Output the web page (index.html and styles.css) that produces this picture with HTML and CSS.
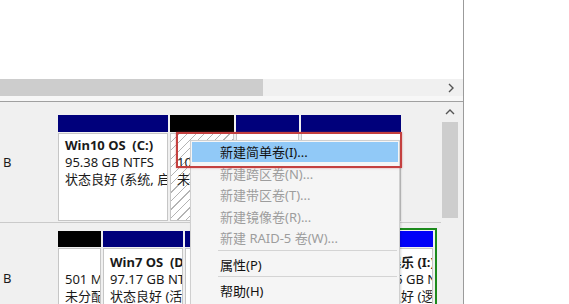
FILE: index.html
```html
<!DOCTYPE html>
<html lang="zh-CN">
<head>
    <meta charset="UTF-8">
    <meta name="viewport" content="width=device-width, initial-scale=1.0">
    <title>磁盘管理</title>
    <link rel="stylesheet" href="styles.css">
</head>
<body>
    <div class="screen">
        <div class="window">
            <div class="volume-list"></div>
            <div class="hscroll">
                <div class="hthumb"></div>
                <div class="htrack"></div>
                <div class="arrow-btn">
                    <svg width="8" height="10" viewBox="0 0 8 10"><polyline points="2,1 6,5 2,9" fill="none" stroke="#555" stroke-width="1.4"/></svg>
                </div>
            </div>
            <div class="splitter"></div>

            <div class="disk-pane">
                <div class="disks">
                    <div class="disk-row row-1">
                        <div class="disk-label">B</div>
                        <div class="segments">
                            <div class="seg" style="width: 110px">
                                <div class="seg-head navy"></div>
                                <div class="seg-body">
                                    <div class="vol-name">Win10 OS &nbsp;(C:)</div>
                                    <div>95.38 GB NTFS</div>
                                    <div>状态良好 (系统, 启动, 页面文件)</div>
                                </div>
                            </div>
                            <div class="seg" style="width: 64px">
                                <div class="seg-head black"></div>
                                <div class="seg-body hatched">
                                    <div class="vol-name">&nbsp;</div>
                                    <div>100 MB</div>
                                    <div>未分配</div>
                                </div>
                            </div>
                            <div class="seg" style="width: 63px">
                                <div class="seg-head navy"></div>
                                <div class="seg-body"></div>
                            </div>
                            <div class="seg" style="width: 100px">
                                <div class="seg-head navy"></div>
                                <div class="seg-body"></div>
                            </div>
                        </div>
                    </div>

                    <div class="disk-row row-2">
                        <div class="disk-label">B</div>
                        <div class="segments">
                            <div class="seg" style="width: 43px">
                                <div class="seg-head black"></div>
                                <div class="seg-body">
                                    <div class="vol-name">&nbsp;</div>
                                    <div>501 MB</div>
                                    <div>未分配</div>
                                </div>
                            </div>
                            <div class="seg" style="width: 80px">
                                <div class="seg-head navy"></div>
                                <div class="seg-body">
                                    <div class="vol-name">Win7 OS &nbsp;(D:)</div>
                                    <div>97.17 GB NTFS</div>
                                    <div>状态良好 (活动, 主分区)</div>
                                </div>
                            </div>
                            <div class="seg" style="width: 170px">
                                <div class="seg-head navy"></div>
                                <div class="seg-body"></div>
                            </div>
                            <div class="seg extended" style="width: 80px">
                                <div class="seg-head blue"></div>
                                <div class="seg-body tight">
                                    <div class="vol-name">休闲娱乐 (I:)</div>
                                    <div>200.45 GB NTFS</div>
                                    <div>状态良好 (逻辑驱动器)</div>
                                </div>
                            </div>
                        </div>
                    </div>
                </div>

                <div class="vscroll">
                    <div class="arrow-up">
                        <svg width="10" height="8" viewBox="0 0 10 8"><polyline points="1,6 5,2 9,6" fill="none" stroke="#555" stroke-width="1.4"/></svg>
                    </div>
                    <div class="vthumb"></div>
                </div>
            </div>
        </div>

        <!-- context menu over the unallocated block -->
        <div class="context-menu">
            <div class="menu-item active">新建简单卷(I)...</div>
            <div class="menu-item disabled">新建跨区卷(N)...</div>
            <div class="menu-item disabled">新建带区卷(T)...</div>
            <div class="menu-item disabled">新建镜像卷(R)...</div>
            <div class="menu-item disabled">新建 RAID-5 卷(W)...</div>
            <div class="menu-sep"></div>
            <div class="menu-item">属性(P)</div>
            <div class="menu-sep"></div>
            <div class="menu-item">帮助(H)</div>
        </div>

        <div class="mark"></div>
    </div>
</body>
</html>
```

FILE: styles.css
```css
body {
    margin: 0;
    font-family: "Noto Sans", "Noto Sans CJK SC", sans-serif;
    font-size: 13px;
    color: #1a1a1a;
    background-color: #fff;
}
.screen {
    position: relative;
    width: 569px;
    height: 304px;
    overflow: hidden;
}
.window {
    width: 463px;
    height: 304px;
    border-right: 1px solid #9b9b9b;
    display: flex;
    flex-direction: column;
}
.volume-list {
    flex-shrink: 0;
    height: 79px;
    background-color: #fff;
}
.hscroll {
    flex-shrink: 0;
    height: 17px;
    display: flex;
    background-color: #f0f0f0;
}
.hthumb {
    width: 263px;
    background-color: #cdcdcd;
}
.htrack {
    flex: 1;
}
.arrow-btn {
    width: 17px;
    margin-right: 4px;
    display: flex;
    align-items: center;
    justify-content: center;
}
.splitter {
    flex-shrink: 0;
    height: 5px;
    background-color: #f7f7f7;
    border-bottom: 1px solid #a0a0a0;
}
.disk-pane {
    flex: 1;
    min-height: 0;
    overflow: hidden;
    display: flex;
    background-color: #f0f0f0;
}
.disks {
    width: 441px;
    flex-shrink: 0;
}
.disk-row {
    display: flex;
}
.row-1 {
    height: 121px;
    box-sizing: border-box;
    border-bottom: 1px solid #cacaca;
}
.row-2 {
    height: 90px;
}
.disk-label {
    width: 58px;
    flex-shrink: 0;
    padding-left: 3px;
    box-sizing: border-box;
    line-height: 17px;
}
.row-1 .disk-label {
    padding-top: 52px;
}
.row-2 .disk-label {
    padding-top: 47px;
}
.segments {
    display: flex;
    gap: 2px;
    align-items: stretch;
}
.row-1 .segments {
    padding: 13px 0 1px;
}
.row-2 .segments {
    padding-top: 8px;
}
.seg {
    display: flex;
    flex-direction: column;
    flex-shrink: 0;
    box-sizing: border-box;
}
.seg-head {
    height: 17px;
    flex-shrink: 0;
}
.row-2 .seg-head {
    height: 16px;
}
.navy {
    background-color: #00007b;
}
.black {
    background-color: #000;
}
.blue {
    background-color: #0000f8;
}
.seg-body {
    flex: 1;
    margin-top: 1px;
    background-color: #fff;
    border: 1px solid #c6c6c6;
    padding: 3px 0 0 6px;
    line-height: 17px;
    white-space: nowrap;
    overflow: hidden;
}
.row-2 .seg-body {
    padding-top: 5px;
}
.seg-body.tight {
    padding-left: 1px;
}
.vol-name {
    font-weight: bold;
}
.hatched {
    background: repeating-linear-gradient(135deg, #fff 0, #fff 5px, #b4b4b4 5px, #b4b4b4 6px);
}
.extended {
    margin-top: -3px;
    border: 2px solid #1c8a1c;
    padding: 1px 2px 0 1px;
}
.vscroll {
    width: 16px;
    margin-left: 1px;
    display: flex;
    flex-direction: column;
}
.arrow-up {
    height: 20px;
    flex-shrink: 0;
    display: flex;
    align-items: center;
    justify-content: center;
}
.vthumb {
    height: 96px;
    flex-shrink: 0;
    background-color: #cdcdcd;
}
.context-menu {
    position: absolute;
    left: 190px;
    top: 140px;
    width: 208px;
    height: 180px;
    padding-top: 1px;
    background-color: #f5f5f5;
    border: 1px solid #cfcfcf;
    box-shadow: 1px 1px 2px rgba(0, 0, 0, 0.15);
}
.menu-item {
    height: 20px;
    line-height: 20px;
    margin: 0 1px 1.5px;
    padding-left: 28px;
    color: #111;
    white-space: nowrap;
}
.menu-item.active {
    background-color: #91c9f7;
}
.menu-item.disabled {
    color: #9d9d9d;
}
.menu-sep {
    height: 1px;
    margin: 0.5px 2px 4px 27px;
    background-color: #d4d4d4;
}
.mark {
    position: absolute;
    left: 176px;
    top: 132px;
    width: 222px;
    height: 32px;
    border: 2px solid #c4403f;
    box-shadow: 0 0 2px rgba(196, 64, 63, 0.5);
}
```
